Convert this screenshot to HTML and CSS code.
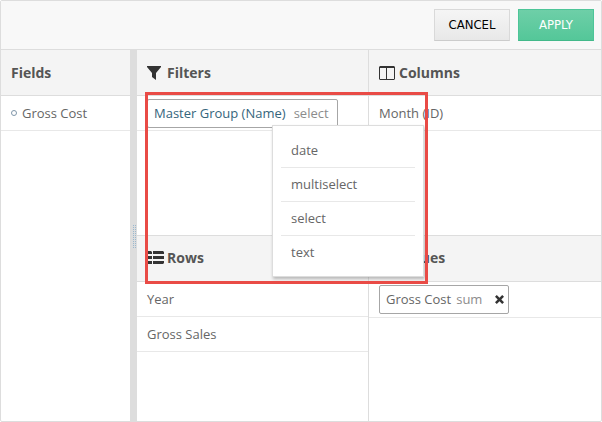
FILE: index.html
```
<!DOCTYPE html>
<html lang="en">
<head>
<meta charset="utf-8">
<title>Pivot configuration</title>
<link rel="stylesheet" href="styles.css">
</head>
<body>
<div class="config">
  <header class="toolbar">
    <button class="btn" type="button">CANCEL</button>
    <button class="btn btn-primary" type="button">APPLY</button>
  </header>
  <main class="workspace">
    <section class="panel">
      <h2 class="panel-title">Fields</h2>
      <ul class="items">
        <li class="item"><span class="bullet"></span>Gross Cost</li>
      </ul>
    </section>
    <div class="splitter"><span class="grip"></span></div>
    <div class="areas">
      <section class="panel area filters">
        <h2 class="panel-title">
          <svg class="icon icon-filter" viewBox="0 0 14 14"><path d="M0 0h14v1L9 7v7L5 11V7L0 1z"/></svg>
          Filters
        </h2>
        <ul class="items">
          <li class="item">
            <div class="chip chip-active">
              Master Group (Name)
              <button class="chip-mode" type="button">select</button>
              <div class="menu">
                <button class="menu-item" type="button">date</button>
                <button class="menu-item" type="button">multiselect</button>
                <button class="menu-item" type="button">select</button>
                <button class="menu-item" type="button">text</button>
              </div>
            </div>
          </li>
        </ul>
        <div class="highlight"></div>
      </section>
      <section class="panel area">
        <h2 class="panel-title">
          <svg class="icon" viewBox="0 0 16 14"><path fill-rule="evenodd" d="M1 0h14l1 1v12l-1 1H1l-1-1V1zM1 2v11h6V2zM8 2v11h7V2z"/></svg>
          Columns
        </h2>
        <ul class="items">
          <li class="item">Month (ID)</li>
        </ul>
      </section>
      <section class="panel area">
        <h2 class="panel-title">
          <svg class="icon icon-rows" viewBox="0 0 17 14"><path d="M0 1l1-1h3l1 1v2H0zM6 0h10l1 1v2H6zM0 5h5v3H0zM6 5h11v3H6zM0 10h5v3H0zM6 10h11v2l-1 1H6z"/></svg>
          Rows
        </h2>
        <ul class="items">
          <li class="item">Year</li>
          <li class="item">Gross Sales</li>
        </ul>
      </section>
      <section class="panel area">
        <h2 class="panel-title">
          <svg class="icon" viewBox="0 0 16 14"><path d="M0 0h16v3H0zM0 5h16v3H0zM0 10h16v3H0z"/></svg>
          Values
        </h2>
        <ul class="items">
          <li class="item item-removable">
            <div class="chip">
              Gross Cost
              <button class="chip-mode chip-sum" type="button">sum</button>
              <button class="chip-remove" type="button" aria-label="Remove">
                <svg class="icon-remove" viewBox="0 0 10 10"><path d="M2 0L5 3 8 0l2 2-3 3 3 3-2 2-3-3-3 3-2-2 3-3-3-3z"/></svg>
              </button>
            </div>
          </li>
        </ul>
      </section>
    </div>
  </main>
</div>
</body>
</html>
```
FILE: styles.css
```
* {
  box-sizing: border-box;
}

body {
  margin: 0;
  background: #fff;
  color: #666;
  font: 13px/20px "Open Sans", "Noto Sans", sans-serif;
}

button {
  margin: 0;
  padding: 0;
  border: 0;
  background: none;
  color: inherit;
  font: inherit;
}

.config {
  display: flex;
  flex-direction: column;
  min-height: 100vh;
  border: 1px solid #ddd;
  border-radius: 2px;
}

.toolbar {
  display: flex;
  justify-content: flex-end;
  gap: 8px;
  padding: 8px 7px;
  border-bottom: 1px solid #ddd;
  background: #f8f8f8;
}

.btn {
  width: 76px;
  height: 32px;
  border: 1px solid #d9d9d9;
  border-bottom-color: #ccc;
  background: linear-gradient(#f5f5f5, #e8e8e8);
  color: #000;
  font-family: "DejaVu Sans Condensed", "Open Sans", sans-serif;
  font-size: 13px;
}

.btn-primary {
  border-color: #4dc598;
  border-bottom-color: #43b98a;
  background: linear-gradient(#6ecfa8, #54c799);
  color: #fff;
}

.workspace {
  display: flex;
  flex: 1;
}

.panel {
  flex: 0 0 129px;
}

.panel-title {
  display: flex;
  align-items: center;
  gap: 4px;
  height: 46px;
  margin: 0;
  padding: 0 10px;
  border-bottom: 1px solid #ddd;
  background: #f4f4f4;
  color: #555;
  font-size: 14px;
  font-weight: 700;
}

.icon {
  width: 16px;
  height: 14px;
  fill: #333;
}

.icon-filter {
  width: 14px;
  margin-right: 2px;
}

.icon-rows {
  width: 17px;
  margin-right: -1px;
}

.items {
  margin: 0;
  padding: 0;
  list-style: none;
}

.item {
  display: flex;
  align-items: center;
  height: 35px;
  padding: 0 10px;
  border-bottom: 1px solid #e8e8e8;
}

.item-removable {
  height: 36px;
}

.bullet {
  width: 6px;
  height: 6px;
  margin-right: 5px;
  border: 1px solid #8096aa;
  border-radius: 50%;
}

.splitter {
  display: flex;
  align-items: center;
  justify-content: center;
  width: 7px;
  background: #ddd;
}

.grip {
  width: 4px;
  height: 24px;
  background: conic-gradient(from 90deg, #9ab8cf 25%, transparent 0) 0 0 / 2px 2px;
}

.areas {
  display: grid;
  flex: 1;
  grid-template-columns: 1fr 1fr;
  grid-template-rows: 1fr 1fr;
}

.area:nth-child(odd) {
  border-right: 1px solid #ddd;
}

.area:nth-child(-n+2) {
  border-bottom: 1px solid #ddd;
}

.filters {
  position: relative;
  z-index: 1;
}

.chip {
  display: flex;
  align-items: center;
  height: 29px;
  padding: 0 4px 0 6px;
  border: 1px solid #a6a6a6;
  border-radius: 2px;
  background: #fff;
}

.chip-active {
  position: relative;
  padding-right: 8px;
  color: #35657c;
}

.chip-mode {
  margin-left: 8px;
  color: #8c8c8c;
}

.chip-sum {
  margin-left: 5px;
}

.chip-remove {
  display: flex;
  margin-left: 13px;
}

.icon-remove {
  width: 9px;
  height: 9px;
  fill: #333;
}

.menu {
  position: absolute;
  top: 25px;
  left: 124px;
  width: 152px;
  padding: 8px;
  border: 1px solid #ddd;
  background: #fff;
  box-shadow: 1px 2px 3px rgba(0, 0, 0, 0.25);
}

.menu-item {
  display: block;
  width: 100%;
  height: 34px;
  padding: 0 10px;
  border-bottom: 1px solid #e8e8e8;
  color: #666;
  text-align: left;
}

.menu-item:last-child {
  height: 32px;
  border-bottom: 0;
}

.highlight {
  position: absolute;
  top: 42px;
  right: -60px;
  bottom: -49px;
  left: 8px;
  border: 3px solid #e94b46;
  pointer-events: none;
}
```
